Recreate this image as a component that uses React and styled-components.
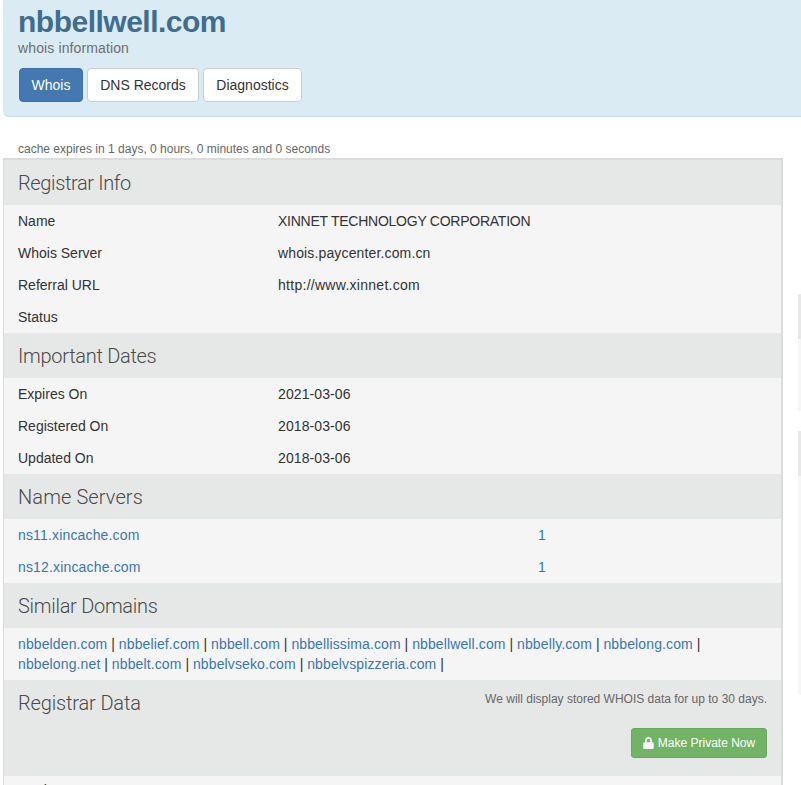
import React from "react";
import styled, { createGlobalStyle } from "styled-components";

const Global = createGlobalStyle`
  html, body { margin: 0; padding: 0; background: #fff; overflow: hidden; }
  body { font-family: "Liberation Sans", Arial, sans-serif; font-size: 14px; color: #333; }
`;

const Page = styled.div`
  height: 785px;
  width: 801px;
  overflow: hidden;
  padding-left: 3px;
  box-sizing: border-box;
`;

const Hero = styled.header`
  height: 117px;
  box-sizing: border-box;
  width: 798px;
  padding: 4px 0 0 15px;
  background: #daebf4;
  border-bottom: 1px solid #c6e0ec;
  border-bottom-left-radius: 6px;
`;

const Title = styled.h1`
  margin: 0;
  font-size: 30px;
  line-height: 36px;
  font-weight: 700;
  letter-spacing: -0.5px;
  color: #3f6d8f;
`;

const Subtitle = styled.div`
  font-size: 14px;
  line-height: 16px;
  letter-spacing: 0.12px;
  color: #6f6f6f;
`;

const Tabs = styled.nav`
  display: flex;
  gap: 4px;
  margin: 12px 0 0 1px;
`;

const Tab = styled.a`
  box-sizing: border-box;
  width: ${(p) => p.$w}px;
  height: 34px;
  display: flex;
  align-items: center;
  justify-content: center;
  border-radius: 4px;
  border: 1px solid ${(p) => (p.$active ? "#3f70a8" : "#cccccc")};
  background: ${(p) => (p.$active ? "#4478b0" : "#ffffff")};
  color: ${(p) => (p.$active ? "#ffffff" : "#333333")};
`;

const Content = styled.div`
  display: flex;
  align-items: flex-start;
`;

const Main = styled.main`
  width: 780px;
  flex-shrink: 0;
`;

const Cache = styled.div`
  margin-top: 24px;
  padding-left: 15px;
  height: 17px;
  font-size: 12px;
  line-height: 17px;
  color: #666;
`;

const Panel = styled.section`
  box-sizing: border-box;
  border: 2px solid #dcdcdc;
  border-bottom: 0;
  border-left-width: 1px;
  background: #f5f5f5;
`;

const Heading = styled.div`
  background: #e6e8e8;
  height: 45px;
  box-sizing: border-box;
  padding-left: 14px;
  display: flex;
  align-items: center;
`;

const HeadingText = styled.h3`
  margin: 0;
  font-family: Roboto, "Liberation Sans", sans-serif;
  font-weight: 300;
  font-size: 20px;
  letter-spacing: ${(p) => p.$track ?? -0.15}px;
  color: #4a4a4a;
`;

const Row = styled.div`
  display: grid;
  grid-template-columns: 260px 260px 1fr;
  height: 32px;
  align-items: center;
  padding-left: 14px;
`;

const Value = styled.span`
  letter-spacing: ${(p) => p.$track || 0}px;
`;

const NsLink = styled.a`
  color: #3a76b5;
  letter-spacing: 0.16px;
`;

const Similar = styled.div`
  padding: 6px 14px 6px;
  line-height: 20px;
  height: 52px;
  box-sizing: border-box;
`;

const DomainLink = styled.a`
  color: #3a76b5;
  letter-spacing: 0.12px;
`;

const DataHeading = styled.div`
  background: #e6e8e8;
  height: 96px;
  box-sizing: border-box;
  padding: 0 14px;
  display: grid;
  grid-template-columns: auto 1fr;
  align-content: start;
`;

const DataTitle = styled(HeadingText)`
  padding-top: 11px;
  line-height: 24px;
`;

const Note = styled.div`
  font-size: 12px;
  line-height: 16px;
  padding-top: 11px;
  text-align: right;
  color: #666;
`;

const Actions = styled.div`
  grid-column: 1 / 3;
  display: flex;
  justify-content: flex-end;
  margin-top: 13px;
`;

const GreenButton = styled.a`
  box-sizing: border-box;
  width: 136px;
  height: 30px;
  display: flex;
  align-items: center;
  justify-content: center;
  gap: 4px;
  background: #72b465;
  border: 1px solid #68aa5b;
  border-radius: 3px;
  color: #fff;
  font-size: 12px;
`;

const Clipped = styled.div`
  padding: 4px 14px;
  line-height: 20px;
  white-space: pre;
`;

const Side = styled.aside`
  margin: 177px 0 0 15px;
  width: 200px;
  flex-shrink: 0;
  display: flex;
  flex-direction: column;
  gap: 20px;
`;

const SideCard = styled.div`
  background: #f6f6f6;
  height: ${(p) => p.$h}px;
`;

const SideHead = styled.div`
  background: #e8e8e8;
  height: 45px;
`;

const LockIcon = () => (
  <svg width="11" height="12" viewBox="0.8 0 10.4 12" aria-hidden="true">
    <path
      fill="#fff"
      d="M2.6 5.2V3.4C2.6 1.3 4 0 6 0s3.4 1.3 3.4 3.4v1.8h.9c.5 0 .9.4.9.9v5c0 .5-.4.9-.9.9H1.7c-.5 0-.9-.4-.9-.9v-5c0-.5.4-.9.9-.9h.9zm1.6 0h3.6V3.5c0-1.1-.8-1.8-1.8-1.8s-1.8.7-1.8 1.8v1.7z"
    />
  </svg>
);

const info = [
  ["Name", "XINNET TECHNOLOGY CORPORATION", -0.25],
  ["Whois Server", "whois.paycenter.com.cn", 0.14],
  ["Referral URL", "http://www.xinnet.com", 0.28],
  ["Status", "", 0],
];
const dates = [
  ["Expires On", "2021-03-06"],
  ["Registered On", "2018-03-06"],
  ["Updated On", "2018-03-06"],
];
const servers = ["ns11.xincache.com", "ns12.xincache.com"];
const similar = [
  "nbbelden.com", "nbbelief.com", "nbbell.com", "nbbellissima.com", "nbbellwell.com",
  "nbbelly.com", "nbbelong.com", "nbbelong.net", "nbbelt.com", "nbbelvseko.com", "nbbelvspizzeria.com",
];

export default function App() {
  return (
    <Page>
      <Global />
      <Hero>
        <Title>nbbellwell.com</Title>
        <Subtitle>whois information</Subtitle>
        <Tabs>
          <Tab $active $w={64}>Whois</Tab>
          <Tab $w={112}>DNS Records</Tab>
          <Tab $w={99}>Diagnostics</Tab>
        </Tabs>
      </Hero>
      <Content>
        <Main>
          <Cache>cache expires in 1 days, 0 hours, 0 minutes and 0 seconds</Cache>
          <Panel>
            <Heading><HeadingText $track={-0.37}>Registrar Info</HeadingText></Heading>
            {info.map(([k, v, t]) => (
              <Row key={k}><span>{k}</span><Value $track={t}>{v}</Value></Row>
            ))}
            <Heading><HeadingText $track={-0.29}>Important Dates</HeadingText></Heading>
            {dates.map(([k, v]) => (
              <Row key={k}><span>{k}</span><Value $track={0.1}>{v}</Value></Row>
            ))}
            <Heading><HeadingText $track={0.1}>Name Servers</HeadingText></Heading>
            {servers.map((s) => (
              <Row key={s}>
                <NsLink>{s}</NsLink>
                <span />
                <NsLink>1</NsLink>
              </Row>
            ))}
            <Heading><HeadingText $track={-0.28}>Similar Domains</HeadingText></Heading>
            <Similar>
              {similar.map((s) => (
                <React.Fragment key={s}>
                  <DomainLink>{s}</DomainLink> |{" "}
                </React.Fragment>
              ))}
            </Similar>
            <DataHeading>
              <DataTitle>Registrar Data</DataTitle>
              <Note>We will display stored WHOIS data for up to 30 days.</Note>
              <Actions>
                <GreenButton><LockIcon />Make Private Now</GreenButton>
              </Actions>
            </DataHeading>
            <Clipped>Registrar: XINNET TECHNOLOGY CORPORATION</Clipped>
          </Panel>
        </Main>
        <Side>
          <SideCard $h={117}><SideHead /></SideCard>
          <SideCard $h={264}><SideHead /></SideCard>
        </Side>
      </Content>
    </Page>
  );
}
